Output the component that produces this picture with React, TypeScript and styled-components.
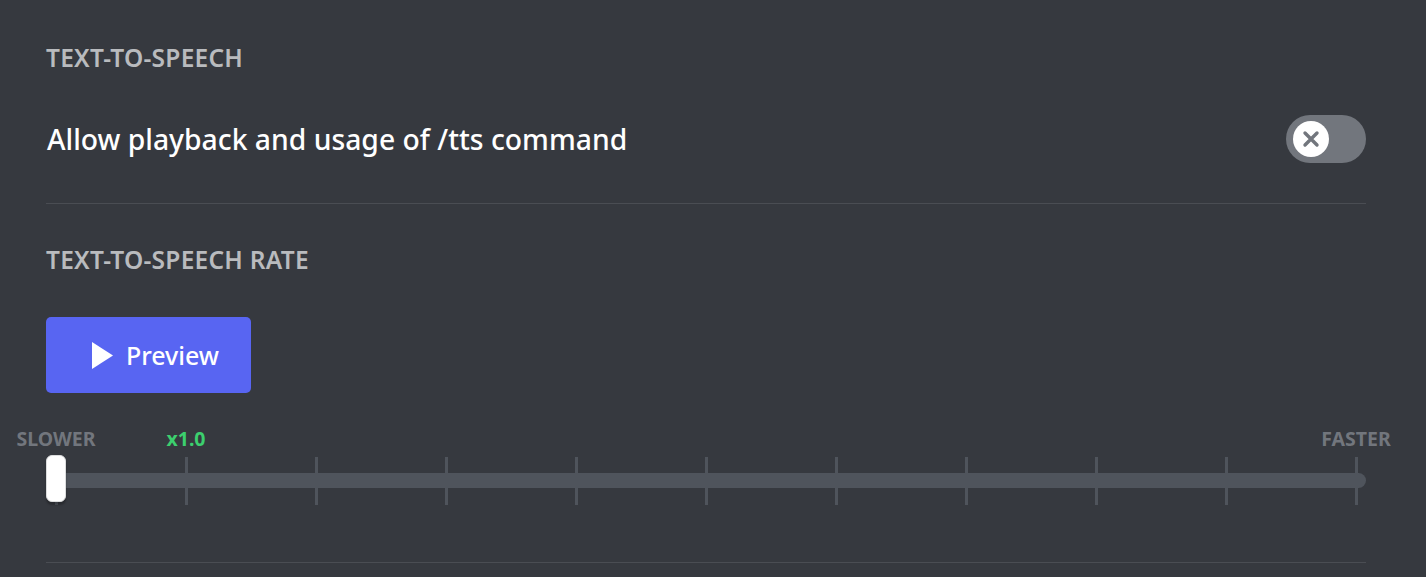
import React from "react";
import styled, { createGlobalStyle } from "styled-components";

const Global = createGlobalStyle`
  html, body { margin: 0; padding: 0; background: #36393f; }
  body { font-family: "Noto Sans", "Open Sans", sans-serif; }
  * { box-sizing: border-box; }
`;

const Page = styled.div`
  width: 1426px;
  height: 577px;
  background: #36393f;
  padding: 43px 60px 0 46px;
  overflow: hidden;
`;

const Heading = styled.h5<{ $mb: number }>`
  margin: 0 0 ${(p) => p.$mb}px 0;
  font-size: 24.5px;
  line-height: 30px;
  font-weight: 600;
  color: #b9bbbe;
  text-transform: uppercase;
  letter-spacing: 0.01em;
`;

const Row = styled.div`
  display: flex;
  align-items: center;
  justify-content: space-between;
  height: 48px;
`;

const Title = styled.div`
  font-size: 28.3px;
  font-weight: 500;
  color: #ffffff;
  line-height: 34px;
  padding-left: 1px;
`;

const Toggle = styled.div`
  width: 80px;
  height: 48px;
  border-radius: 24px;
  background: #72767d;
  display: flex;
  align-items: center;
  padding-left: 7px;
`;

const Knob = styled.div`
  width: 36px;
  height: 36px;
  border-radius: 50%;
  background: #ffffff;
  display: flex;
  align-items: center;
  justify-content: center;
`;

const Divider = styled.div<{ $mt: number; $mb: number }>`
  height: 1px;
  background: #4a4d53;
  margin: ${(p) => p.$mt}px 0 ${(p) => p.$mb}px 0;
`;

const Button = styled.button`
  width: 205px;
  height: 76px;
  border: none;
  border-radius: 5px;
  background: #5865f2;
  color: #ffffff;
  display: flex;
  align-items: center;
  justify-content: center;
  gap: 13px;
  font-family: inherit;
  font-size: 25px;
  font-weight: 500;
  padding: 0 0 0 14px;
  cursor: pointer;
`;

const Slider = styled.div`
  margin-top: 36px;
  display: grid;
  width: 1320px;
`;

const Layer = styled.div`
  grid-area: 1 / 1;
`;

const Track = styled(Layer)`
  align-self: start;
  margin-top: 44px;
  height: 15px;
  border-radius: 8px;
  background: #4f545c;
`;

const Markers = styled(Layer)`
  display: flex;
  justify-content: space-between;
  padding: 0 8.5px;
`;

const Marker = styled.div`
  width: 3px;
  display: flex;
  flex-direction: column;
  align-items: center;
`;

const MarkLabel = styled.div<{ $green?: boolean }>`
  height: 20px;
  line-height: 20px;
  margin-bottom: 8px;
  font-size: 19.5px;
  font-weight: 700;
  white-space: nowrap;
  color: ${(p) => (p.$green ? "#3ccf6e" : "#72767d")};
`;

const Tick = styled.div`
  width: 3px;
  height: 48px;
  background: #4f545c;
`;

const Handle = styled(Layer)`
  align-self: start;
  justify-self: start;
  margin-top: 26px;
  width: 20px;
  height: 47px;
  border-radius: 6px;
  background: #ffffff;
  border: 1px solid #dcddde;
  box-shadow: 0 3px 2px rgba(0, 0, 0, 0.25);
`;

const labels: Record<number, { text: string; green?: boolean }> = {
  0: { text: "SLOWER" },
  1: { text: "x1.0", green: true },
  10: { text: "FASTER" },
};

export default function App() {
  return (
    <Page>
      <Global />
      <Heading $mb={42}>Text-to-Speech</Heading>
      <Row>
        <Title>Allow playback and usage of /tts command</Title>
        <Toggle>
          <Knob>
            <svg width="20" height="20" viewBox="0 0 20 20">
              <path d="M4 4 L16 16 M16 4 L4 16" stroke="#72767d" strokeWidth="3.4" strokeLinecap="round" />
            </svg>
          </Knob>
        </Toggle>
      </Row>
      <Divider $mt={40} $mb={41} />
      <Heading $mb={42}>Text-to-Speech Rate</Heading>
      <Button>
        <svg width="21" height="27" viewBox="0 0 21 27">
          <path d="M0 0 L21 13.5 L0 27 Z" fill="#ffffff" />
        </svg>
        Preview
      </Button>
      <Slider>
        <Track />
        <Markers>
          {Array.from({ length: 11 }).map((_, i) => (
            <Marker key={i}>
              <MarkLabel $green={labels[i]?.green}>{labels[i]?.text ?? ""}</MarkLabel>
              <Tick />
            </Marker>
          ))}
        </Markers>
        <Handle />
      </Slider>
      <Divider $mt={57} $mb={0} />
    </Page>
  );
}
